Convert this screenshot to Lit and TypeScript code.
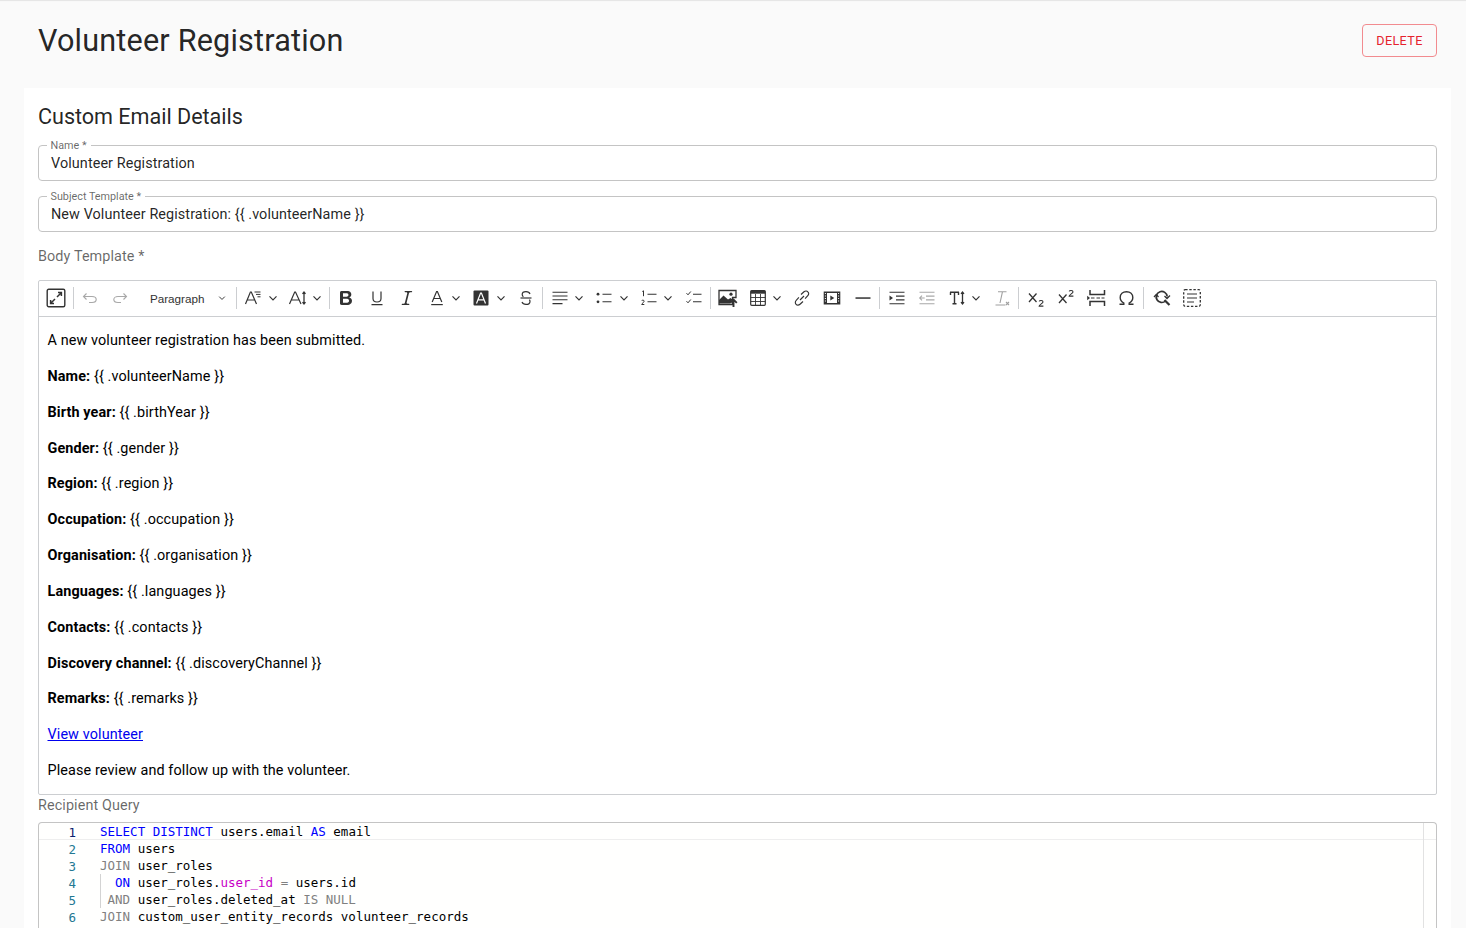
import { LitElement, html, css, svg } from "lit";
import { customElement } from "lit/decorators.js";

const s = (body: unknown) =>
    html`<svg class="ic" viewBox="0 0 20 20" width="20" height="20">${body}</svg>`;

const chev = html`<svg class="chev" viewBox="0 0 10 10" width="10" height="10"><path d="M1.500 3.300 5 6.800l3.500-3.500" fill="none" stroke="#333" stroke-width="1.200"/></svg>`;

const line = "fill:none;stroke:#333;stroke-width:1.200";

const icons: Record<string, unknown> = {
    full: svg`<rect x="1.200" y="1.200" width="17.600" height="17.600" rx="1.500" fill="none" stroke="#333" stroke-width="1.400"/><path d="M11 9l4-4M12 4.600h3.400V8M9 11l-4 4M8 15.400H4.600V12" style="fill:none;stroke:#333;stroke-width:1.500"/>`,
    undo: svg`<path d="M6.500 5.500 3.500 8.500l3 3M3.700 8.500H12c2.500 0 4.200 1.200 4.200 3s-1.700 3-4.200 3H9" style="fill:none;stroke:#a8a8a8;stroke-width:1.100"/>`,
    redo: svg`<path d="M13.500 5.500l3 3-3 3M16.300 8.500H8c-2.500 0-4.200 1.200-4.200 3s1.700 3 4.200 3h3" style="fill:none;stroke:#a8a8a8;stroke-width:1.100"/>`,
    family: svg`<path d="M2.500 16 7.400 4h.9L13.500 16M4.400 12h7.300" style=${line}/><path d="M11.500 4h6M13 6.400h4.500M14.500 8.800h3" style="fill:none;stroke:#333;stroke-width:1"/>`,
    size: svg`<path d="M1.500 16 6.700 4h.8L13 16M3.300 12h7.600" style=${line}/><path d="M16 4v12M14.500 5.800 16 4l1.500 1.800M14.500 14.200 16 16l1.500-1.800" style="fill:none;stroke:#333;stroke-width:1.300"/>`,
    bold: svg`<path fill="#333" d="M10.187 17H5.773c-.637 0-1.092-.138-1.364-.415-.273-.277-.409-.718-.409-1.323V4.738c0-.617.14-1.062.419-1.332.279-.27.73-.406 1.354-.406h4.680c.69 0 1.288.041 1.793.124.506.083.96.242 1.360.478.341.197.644.447.906.75a3.262 3.262 0 0 1 .808 2.162c0 1.401-.722 2.426-2.167 3.075C15.050 10.175 16 11.315 16 13.010a3.756 3.756 0 0 1-2.296 3.504 6.100 6.100 0 0 1-1.517.377c-.571.073-1.238.11-2 .11zm-.217-6.217H7v4.087h3.069c1.977 0 2.965-.69 2.965-2.072 0-.707-.256-1.220-.768-1.537-.512-.319-1.277-.478-2.296-.478zM7 5.130v3.619h2.606c.729 0 1.292-.067 1.690-.2a1.600 1.600 0 0 0 .91-.765c.165-.267.247-.566.247-.897 0-.707-.26-1.176-.778-1.409-.519-.232-1.310-.348-2.375-.348H7z"/>`,
    underline: svg`<path d="M6 3.500v7c0 2.400 1.700 3.500 4 3.500s4-1.100 4-3.500v-7M4.500 16.700h11" style=${line}/>`,
    italic: svg`<path fill="#333" d="m9.586 14.633.021.004c-.036.335.095.655.393.962.082.083.173.15.274.201h1.474a.6.6 0 1 1 0 1.200H5.304a.6.6 0 0 1 0-1.200h1.150c.474-.07.809-.182 1.005-.334.157-.122.291-.32.404-.597l2.416-9.550a1.053 1.053 0 0 0-.281-.823 1.120 1.120 0 0 0-.442-.296H8.150a.6.6 0 0 1 0-1.200h6.443a.6.6 0 1 1 0 1.200h-1.195c-.376.056-.65.155-.823.296-.215.175-.423.439-.623.79l-2.366 9.347z"/>`,
    color: svg`<path d="M5.200 14 9.600 3.500h.8L14.800 14M6.700 10.500h6.600" style=${line}/><rect x="4.200" y="16" width="11.600" height="1.200" fill="#333"/>`,
    bg: svg`<rect x="2.500" y="2.500" width="15" height="15" rx="1" fill="#333"/><path d="M5.500 15.500 9.600 5h.8l4.100 10.500M7 11.800h6" style="fill:none;stroke:#fff;stroke-width:1.200"/>`,
    strike: svg`<path d="M4.500 10h11" style=${line}/><path d="M14 6c-.5-1.500-2-2.300-4-2.300-2.300 0-3.800 1.100-3.800 2.800 0 1 .4 1.700 1.200 2.300M6 14c.6 1.600 2.100 2.400 4 2.400 2.400 0 4-1.200 4-3 0-.7-.2-1.300-.6-1.800" style=${line}/>`,
    align: svg`<path d="M2.500 4.200h15M2.500 8h15M2.500 11.800h15M2.500 15.600h10" style="fill:none;stroke:#333;stroke-width:1.100"/>`,
    bullet: svg`<circle cx="4" cy="6.200" r="1.400" fill="#333"/><circle cx="4" cy="13.800" r="1.400" fill="#333"/><path d="M8.500 6.200h9M8.500 13.800h9" style="fill:none;stroke:#333;stroke-width:1.100"/>`,
    number: svg`<path d="M3.300 3.500l1.200-.7v5.400" style="fill:none;stroke:#333;stroke-width:1"/><path d="M2.700 12.800c.3-1 2.400-1 2.400.4 0 1.200-2.300 2.200-2.400 3.300h2.600" style="fill:none;stroke:#333;stroke-width:1"/><path d="M8.500 6.200h9M8.500 13.800h9" style="fill:none;stroke:#333;stroke-width:1.100"/>`,
    todo: svg`<path d="M2.500 5.200 4 6.800l2.800-3.300M2.500 13.200 4 14.800l2.800-3.300" style="fill:none;stroke:#333;stroke-width:1"/><path d="M9 6.200h8.500M9 13.800h8.500" style="fill:none;stroke:#333;stroke-width:1.100"/>`,
    image: svg`<path d="M1 2.500h17v7h-3.500v7H1z" fill="#fff" stroke="#333" stroke-width="1.300"/><path d="M1 15.500V12l4.500-4.500 4.500 4 2.500-1.500 2 1.500-2.500 4z" fill="#333"/><circle cx="13" cy="6.200" r="1.600" fill="#333"/><path d="M15.500 19v-7M12.200 14.800l3.300-3.300 3.300 3.300" style="fill:none;stroke:#333;stroke-width:1.900"/>`,
    table: svg`<rect x="2.700" y="2.700" width="14.600" height="14.600" rx="1" fill="none" stroke="#333" stroke-width="1.200"/><rect x="2.700" y="2.700" width="14.600" height="3" fill="#333"/><path d="M2.700 9.500h14.600M2.700 13.500h14.600M7.500 6v11M12.500 6v11" style="fill:none;stroke:#333;stroke-width:.9"/>`,
    link: svg`<path d="M9 6.500 12 3.800c1.300-1.200 3-1 3.900 0 1 1 1.100 2.700-.1 3.900l-2.700 3M11 13.500l-3 2.700c-1.300 1.200-3 1.100-3.900.1-1-1-1.100-2.700.1-3.900l2.700-3M8 12l4-4" style="fill:none;stroke:#333;stroke-width:1.150"/>`,
    media: svg`<rect x="1.700" y="3.500" width="16.600" height="13" fill="#333"/><rect x="5" y="5" width="10" height="10" fill="#fff"/><path d="M8.300 7.500v5l4-2.500z" fill="#333"/><path d="M3.400 5v10M16.600 5v10" style="fill:none;stroke:#fff;stroke-width:1;stroke-dasharray:1 1.500"/>`,
    hr: svg`<rect x="2.500" y="9.300" width="15" height="1.500" fill="#333"/>`,
    indent: svg`<path d="M2.500 4.200h15M9 8.100h8.500M9 11.900h8.500M2.500 15.800h15" style="fill:none;stroke:#333;stroke-width:1.100"/><path d="M2.500 7.500v5l3.500-2.500z" fill="#333"/>`,
    outdent: svg`<path d="M2.500 4.200h15M9 8.100h8.500M9 11.900h8.500M2.500 15.800h15" style="fill:none;stroke:#a8a8a8;stroke-width:1.100"/><path d="M2.700 10h5M5 7.700 2.700 10 5 12.300" style="fill:none;stroke:#a8a8a8;stroke-width:1.100"/>`,
    tt: svg`<path d="M3 4.200h9M7.500 4.200v11.600M5.500 15.800h4M3.500 7V4.200M11.500 7V4.200" style="fill:none;stroke:#333;stroke-width:1.400"/><path d="M15.500 4v12M14 5.800 15.500 4 17 5.800M14 14.200l1.500 1.800 1.500-1.800" style="fill:none;stroke:#333;stroke-width:1.300"/>`,
    clear: svg`<path d="M6 3.700h8.500M10.500 3.700 8 15M3.500 17h10" style="fill:none;stroke:#a0a0a0;stroke-width:1.100"/><path d="M14 14l3 3M17 14l-3 3" style="fill:none;stroke:#a0a0a0;stroke-width:1.100"/>`,
    sub: svg`<path d="M3 5.500l7.500 8.500M10.500 5.500 3 14" style="fill:none;stroke:#333;stroke-width:1.300"/><path d="M13.200 13.400c.4-1.300 3.800-1.400 3.800.5 0 1.500-3.600 2.400-3.800 4.200H17.400" style="fill:none;stroke:#333;stroke-width:1.100"/>`,
    sup: svg`<path d="M3 6.500l7.500 8.500M10.500 6.500 3 15" style="fill:none;stroke:#333;stroke-width:1.300"/><path d="M13.200 3.400c.4-1.300 3.800-1.400 3.800.5 0 1.500-3.600 2.400-3.800 4.200H17.400" style="fill:none;stroke:#333;stroke-width:1.100"/>`,
    page: svg`<path d="M4 2v4.500h14.500V2M4 18v-4.500h14.500V18" style="fill:none;stroke:#333;stroke-width:1.500"/><path d="M5 10h3.500M10.500 10h3.500M15.500 10h3" style="fill:none;stroke:#333;stroke-width:1.200"/><path d="M1.200 7.700v4.600L4 10z" fill="#333"/>`,
    omega: svg`<path d="M3.500 16.300h4.300v-1.300C5.500 13.800 4.200 11.900 4.200 9.500c0-3.300 2.600-5.800 6.300-5.800s6.300 2.500 6.300 5.800c0 2.400-1.300 4.300-3.600 5.500v1.300h4.300" style="fill:none;stroke:#333;stroke-width:1.400"/>`,
    find: svg`<path d="M15.200 8.500A5.500 5.500 0 1 0 13.500 13" style="fill:none;stroke:#333;stroke-width:1.700"/><path d="M12.500 12l5 5" style="fill:none;stroke:#333;stroke-width:2.200"/><path d="M2 9l2.300-2.500L6.500 9M12.500 8l2.500 2.500 3-3" style="fill:none;stroke:#333;stroke-width:1.300"/>`,
    select: svg`<rect x="1.700" y="1.700" width="16.600" height="16.600" rx="1.500" fill="none" stroke="#333" stroke-width="1.300" stroke-dasharray="2.400 1.700"/><path d="M5 6h10M5 10h10M5 14h7" style="fill:none;stroke:#333;stroke-width:1.100"/>`,
};

type Item = string | [string, "chev"];

const toolbar: Item[] = [
    "full", "|", "undo", "redo", "para", "|",
    ["family", "chev"], ["size", "chev"], "|",
    "bold", "underline", "italic", ["color", "chev"], ["bg", "chev"], "strike", "|",
    ["align", "chev"], ["bullet", "chev"], ["number", "chev"], "todo", "|",
    "image", ["table", "chev"], "link", "media", "hr", "|",
    "indent", "outdent", ["tt", "chev"], "clear", "|",
    "sub", "sup", "page", "omega", "|",
    "find", "select",
];

const fields: [string, string][] = [
    ["Name", "{{ .volunteerName }}"],
    ["Birth year", "{{ .birthYear }}"],
    ["Gender", "{{ .gender }}"],
    ["Region", "{{ .region }}"],
    ["Occupation", "{{ .occupation }}"],
    ["Organisation", "{{ .organisation }}"],
    ["Languages", "{{ .languages }}"],
    ["Contacts", "{{ .contacts }}"],
    ["Discovery channel", "{{ .discoveryChannel }}"],
    ["Remarks", "{{ .remarks }}"],
];

const k = (t: string) => html`<span class="kw">${t}</span>`;
const g = (t: string) => html`<span class="gr">${t}</span>`;

const code = [
    html`${k("SELECT")} ${k("DISTINCT")} users.email ${k("AS")} email`,
    html`${k("FROM")} users`,
    html`${g("JOIN")} user_roles`,
    html`<span class="guide"></span>  ${k("ON")} user_roles.<span class="mg">user_id</span> ${g("=")} users.id`,
    html`<span class="guide"></span> ${g("AND")} user_roles.deleted_at ${g("IS")} ${g("NULL")}`,
    html`${g("JOIN")} custom_user_entity_records volunteer_records`,
];

@customElement("app-root")
export class AppRoot extends LitElement {
    static override styles = css`
        :host {
            display: block;
            height: 928px;
            overflow: hidden;
            background: #fafafa;
            font-family: Roboto, sans-serif;
            color: rgba(0, 0, 0, 0.87);
            box-shadow: inset 0 2px 1px -1px #e4e4e4;
        }
        .head {
            display: flex;
            justify-content: space-between;
            align-items: flex-start;
            padding: 24px 29px 0 38px;
            height: 88px;
            box-sizing: border-box;
        }
        h1 {
            margin: -2px 0 0;
            font-size: 30.6px;
            font-weight: 400;
            line-height: 38px;
            letter-spacing: 0.18px;
        }
        .del {
            width: 75px;
            height: 33px;
            box-sizing: border-box;
            border: 1px solid #f28b8f;
            border-radius: 4px;
            background: transparent;
            color: #e5222c;
            font: 400 12.6px Roboto, sans-serif;
            letter-spacing: 0.4px;
            padding: 0;
        }
        .card {
            margin: 0 15px 0 24px;
            padding: 14px 14px 0;
            background: #fff;
        }
        h2 {
            margin: 0;
            font-size: 21.6px;
            font-weight: 400;
            line-height: 30px;
            letter-spacing: -0.03px;
        }
        fieldset {
            margin: 0 0 8px;
            padding: 0 12px;
            height: 43px;
            box-sizing: border-box;
            border: 1px solid #c4c4c4;
            border-radius: 4px;
            min-width: 0;
        }
        fieldset:first-of-type { margin-top: 6px; }
        legend {
            margin-left: -4.5px;
            padding: 2px 4px 0;
            font-size: 10.8px;
            line-height: 12px;
            color: rgba(0, 0, 0, 0.6);
        }
        .val {
            font-size: 14.4px;
            line-height: 20px;
            padding-top: 2px;
            letter-spacing: 0.09px;
        }
        .lab {
            font-size: 14.4px;
            line-height: 20px;
            color: rgba(0, 0, 0, 0.6);
            letter-spacing: 0.1px;
        }
        .lab.body { margin: 15px 0 13px; }
        .editor {
            border: 1px solid #ccced1;
            border-radius: 2px;
        }
        .bar {
            display: flex;
            align-items: center;
            height: 34px;
            padding: 0 0 1px 2px;
            border-bottom: 1px solid #ccced1;
        }
        .ic { display: block; flex: none; }
        .btn {
            display: flex;
            align-items: center;
            justify-content: center;
            width: 30.15px;
            flex: none;
        }
        .btn.drop {
            width: 44.5px;
            gap: 4.5px;
            justify-content: flex-start;
            padding-left: 5px;
            box-sizing: border-box;
        }
        .chev { display: block; flex: none; }
        .sep {
            width: 1px;
            height: 22px;
            margin: 0 1.5px;
            background: #ccced1;
            flex: none;
        }
        .sep:nth-last-child(3) { margin-right: 3.5px; }
        .para {
            display: flex;
            align-items: center;
            justify-content: space-between;
            width: 99px;
            box-sizing: border-box;
            padding: 0 8px 0 14.5px;
            flex: none;
            font: 11.7px "Liberation Sans", sans-serif;
            color: #333;
        }
        .para .chev { width: 8px; height: 8px; }
        .content {
            padding: 14px 9px 13px 8.5px;
            font-size: 14.4px;
            line-height: 20px;
            letter-spacing: 0.11px;
            color: #000;
        }
        .content p { margin: 0 0 15.85px; }
        .content p:last-child { margin: 0; }
        .content a { color: #0000ee; }
        .content b { font-weight: 700; }
        .lab.q { margin: 1px 0 6px; }
        .code {
            position: relative;
            height: 200px;
            border: 1px solid #c4c4c4;
            border-bottom: 0;
            border-radius: 4px 4px 0 0;
            background: #fffffe;
            font: 12.5px/17px "DejaVu Sans Mono", monospace;
        }
        .row {
            display: flex;
            height: 17px;
            white-space: pre;
            color: #000;
        }
        .row:first-child { box-shadow: inset 0 -1px 0 #eeeeee; }
        .num {
            width: 37px;
            text-align: right;
            color: #237893;
            flex: none;
            margin-right: 24px;
            padding-top: 1px;
        }
        .row:first-child .num { color: #0b216f; }
        .kw { color: #0000ff; }
        .gr { color: #808080; }
        .mg { color: #c700c7; }
        .txt { position: relative; }
        .guide {
            position: absolute;
            left: 0;
            top: 0;
            bottom: 0;
            width: 1px;
            background: #d3d3d3;
        }
        .ruler {
            position: absolute;
            top: 0;
            bottom: 0;
            right: 12px;
            width: 1px;
            background: #e2e2e2;
        }
    `;

    private renderItem(item: Item) {
        if (item === "|") return html`<div class="sep"></div>`;
        if (item === "para")
            return html`<div class="para"><span>Paragraph</span>${chev}</div>`;
        if (Array.isArray(item))
            return html`<div class="btn drop">${s(icons[item[0]])}${chev}</div>`;
        return html`<div class="btn">${s(icons[item])}</div>`;
    }

    override render() {
        return html`
            <div class="head">
                <h1>Volunteer Registration</h1>
                <button class="del">DELETE</button>
            </div>
            <div class="card">
                <h2>Custom Email Details</h2>
                <fieldset>
                    <legend>Name *</legend>
                    <div class="val">Volunteer Registration</div>
                </fieldset>
                <fieldset>
                    <legend>Subject Template *</legend>
                    <div class="val">New Volunteer Registration: {{ .volunteerName }}</div>
                </fieldset>
                <div class="lab body">Body Template *</div>
                <div class="editor">
                    <div class="bar">${toolbar.map((i) => this.renderItem(i))}</div>
                    <div class="content">
                        <p>A new volunteer registration has been submitted.</p>
                        ${fields.map(([a, b]) => html`<p><b>${a}:</b> ${b}</p>`)}
                        <p><a href="#">View volunteer</a></p>
                        <p>Please review and follow up with the volunteer.</p>
                    </div>
                </div>
                <div class="lab q">Recipient Query</div>
                <div class="code">
                    ${code.map(
                        (c, i) => html`<div class="row"><span class="num">${i + 1}</span><span class="txt">${c}</span></div>`,
                    )}
                    <div class="ruler"></div>
                </div>
            </div>
        `;
    }
}
